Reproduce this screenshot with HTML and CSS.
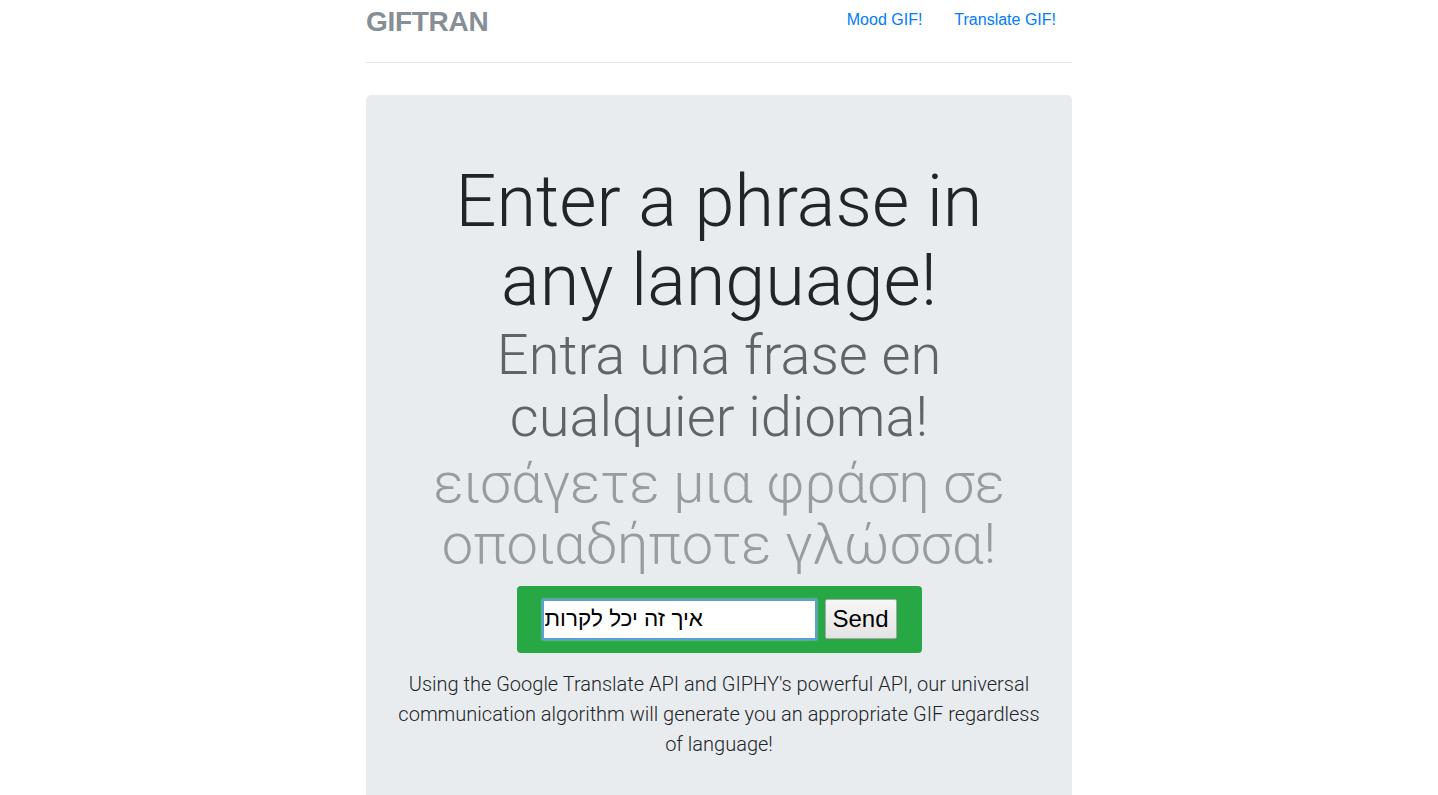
FILE: index.html
```html
<!DOCTYPE html>
<html lang="en">
<head>
    <meta charset="UTF-8">
    <meta name="viewport" content="width=device-width, initial-scale=1.0">
    <title>GIFTRAN</title>
    <link rel="stylesheet" href="styles.css">
</head>
<body>
    <div class="container">
        <!-- Header -->
        <div class="header">
            <h3 class="brand">GIFTRAN</h3>
            <nav class="nav">
                <a href="#" class="nav-link">Mood GIF!</a>
                <a href="#" class="nav-link">Translate GIF!</a>
            </nav>
        </div>

        <!-- Jumbotron -->
        <div class="jumbotron">
            <h1 class="display-3">Enter a phrase in any language!</h1>
            <h2 class="display-4 spanish">Entra una frase en cualquier idioma!</h2>
            <h2 class="display-4 greek">εισάγετε μια φράση σε οποιαδήποτε γλώσσα!</h2>

            <form class="send-form" id="sendForm">
                <input type="text" class="phrase" id="phrase" value="איך זה יכל לקרות">
                <button type="submit" class="send">Send</button>
            </form>

            <p class="lead">Using the Google Translate API and GIPHY's powerful API, our universal communication algorithm will generate you an appropriate GIF regardless of language!</p>
        </div>
    </div>
</body>
</html>
```

FILE: styles.css
```css
* {
    margin: 0;
    padding: 0;
    box-sizing: border-box;
}

body {
    font-family: "Liberation Sans", Arial, sans-serif;
    font-size: 16px;
    color: #212529;
    background: #fff;
}

.container {
    width: 706px;
    margin: 0 auto;
}

.header {
    display: flex;
    justify-content: space-between;
    align-items: flex-start;
    padding-bottom: 18px;
    border-bottom: 1px solid #e5e5e5;
}

.brand {
    font-size: 28px;
    font-weight: bold;
    line-height: 44px;
    color: #868e96;
    letter-spacing: -0.3px;
}

.nav {
    display: flex;
}

.nav-link {
    display: block;
    padding: 8px 16px;
    line-height: 24px;
    color: #007bff;
    text-decoration: none;
}

.nav-link:hover {
    text-decoration: underline;
}

.jumbotron {
    margin-top: 32px;
    padding: 64px 32px;
    background: #e9ecef;
    border-radius: 5px;
    text-align: center;
    min-height: 800px;
}

.display-3,
.display-4 {
    font-family: Roboto, "Liberation Sans", sans-serif;
    font-weight: 300;
    line-height: 1.1;
}

.display-3 {
    font-size: 72px;
    padding-top: 3px;
    margin-bottom: 5px;
    color: #212529;
}

.display-4 {
    font-size: 56px;
}

.spanish {
    margin-bottom: 4px;
    color: #5f6468;
}

.greek {
    margin-bottom: 10px;
    color: #999c9f;
}

.send-form {
    display: inline-flex;
    align-items: center;
    padding: 13px 25px;
    margin-bottom: 16px;
    background: #28a745;
    border-radius: 4px;
}

.phrase {
    width: 275px;
    height: 41px;
    padding: 2px 1px;
    margin-right: 8px;
    font-family: "Liberation Sans", "DejaVu Sans", sans-serif;
    font-size: 22.5px;
    color: #000;
    background: #fff;
    border: 2px solid #5e9ed6;
    box-shadow: 0 0 2px #9ecaed;
    outline: none;
}

.send {
    width: 72px;
    height: 40px;
    font-family: "Liberation Sans", Arial, sans-serif;
    font-size: 24px;
    color: #000;
    background: linear-gradient(#f6f6f6, #e4e4e4);
    border: 1px solid #a6a6a6;
    border-radius: 2px;
    cursor: pointer;
}

.lead {
    font-family: Roboto, "Liberation Sans", sans-serif;
    font-size: 20px;
    font-weight: 300;
    line-height: 30px;
    color: #212529;
}
```
